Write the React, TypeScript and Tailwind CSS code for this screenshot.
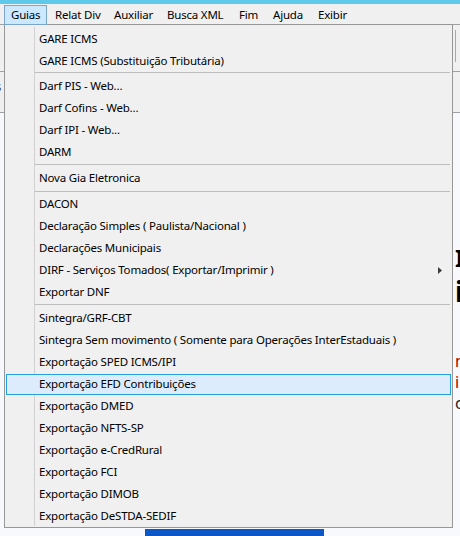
import type { ReactNode } from "react";

type Entry =
  | { label: string; active?: boolean; submenu?: boolean }
  | { sep: number; line: number };

const entries: Entry[] = [
  { label: "GARE ICMS" },
  { label: "GARE ICMS (Substituição Tributária)" },
  { sep: 3, line: 0 },
  { label: "Darf PIS - Web..." },
  { label: "Darf Cofins - Web..." },
  { label: "Darf IPI - Web..." },
  { label: "DARM" },
  { sep: 4, line: 1 },
  { label: "Nova Gia Eletronica" },
  { sep: 4, line: 2 },
  { label: "DACON" },
  { label: "Declaração Simples ( Paulista/Nacional )" },
  { label: "Declarações Municipais" },
  { label: "DIRF - Serviços Tomados( Exportar/Imprimir )", submenu: true },
  { label: "Exportar DNF" },
  { sep: 4, line: 1 },
  { label: "Sintegra/GRF-CBT" },
  { label: "Sintegra Sem movimento ( Somente para Operações InterEstaduais )" },
  { label: "Exportação SPED ICMS/IPI" },
  { label: "Exportação EFD Contribuições", active: true },
  { label: "Exportação DMED" },
  { label: "Exportação NFTS-SP" },
  { label: "Exportação e-CredRural" },
  { label: "Exportação FCI" },
  { label: "Exportação DIMOB" },
  { label: "Exportação DeSTDA-SEDIF" },
];

const menuBar = [
  { label: "Guias", w: "w-[43px]", pl: "pl-[6px]" },
  { label: "Relat Div", w: "w-[60px]", pl: "pl-[7px]" },
  { label: "Auxiliar", w: "w-[53px]", pl: "pl-[6px]" },
  { label: "Busca XML", w: "w-[72px]", pl: "pl-[6px]" },
  { label: "Fim", w: "w-[34px]", pl: "pl-[6px]" },
  { label: "Ajuda", w: "w-[45px]", pl: "pl-[6px]" },
  { label: "Exibir", w: "w-[50px]", pl: "pl-[6px]" },
];

const SubArrow = () => (
  <svg width="4" height="7" viewBox="0 0 4 7" className="self-center mr-[8px] ml-auto">
    <path d="M0 0 L4 3.5 L0 7 Z" fill="#3c3c3c" />
  </svg>
);

const MenuItem = ({ label, active, submenu }: { label: string; active?: boolean; submenu?: boolean }) => (
  <div className={`h-[22px] px-[1px] pt-[1px] ${active ? "relative" : ""}`}>
    <div
      className={`flex h-[21px] border pl-[32px] ${
        active ? "border-[#26a0da] bg-[#dcecfc]" : "border-transparent"
      }`}
    >
      <span className="leading-[17px] whitespace-nowrap">{label}</span>
      {submenu && <SubArrow />}
    </div>
  </div>
);

const Separator = ({ h, line }: { h: number; line: number }) => (
  <div style={{ height: h, paddingTop: line }}>
    <div className="ml-[30px] mr-[2px] h-px bg-[#bdbdbd]" />
  </div>
);

const Frag = ({ children, className }: { children: ReactNode; className: string }) => (
  <div className={`whitespace-nowrap ${className}`}>{children}</div>
);

export default function App() {
  return (
    <div className="relative w-[460px] h-[536px] overflow-hidden bg-[#f7f9fc] font-['Noto_Sans',sans-serif] text-[11.5px] tracking-[-0.2px] text-black">
      {/* title bar edge */}
      <div className="h-[4px] bg-[#5fc9ea]" />

      {/* menu bar */}
      <div className="flex h-[20px] bg-[#f0f0f0] pl-[4px]">
        {menuBar.map((m, i) => (
          <div
            key={m.label}
            className={`${m.w} ${m.pl} mt-[1px] h-[20px] border leading-[18px] whitespace-nowrap ${
              i === 0 ? "relative z-20 border-[#7aa5cf] bg-[#cce8ff]" : "border-transparent"
            }`}
          >
            {m.label}
          </div>
        ))}
      </div>

      {/* window behind the menu */}
      <div className="border-t border-[#a0a0a0] bg-[#f0f0f0] h-[47px] flex justify-end pt-[5px]">
        <div className="mr-[4px] w-px h-[32px] bg-[#a9a9a9]" />
      </div>
      <div className="border-t border-[#a0a0a0] bg-[#f0f0f0] h-[41px] overflow-hidden">
        <div className="mt-[6px] ml-[-33px] text-[12px] text-[#333]">Status</div>
      </div>
      <div className="border-t border-[#a0a0a0] h-[424px] flex flex-col">
        <div className="flex flex-1">
          <div className="flex-1" />
          <div className="w-[5px] overflow-hidden pt-[133px] tracking-normal">
            <Frag className="text-[24px] font-bold leading-[24px] text-black">Importação</Frag>
            <Frag className="mt-[6px] text-[28px] font-bold leading-[30px] text-black">in</Frag>
            <Frag className="mt-[45px] text-[16px] leading-[21px] text-[#b00000]">m</Frag>
            <Frag className="text-[16px] leading-[21px] text-[#b00000]">ib</Frag>
            <Frag className="text-[16px] leading-[21px] text-[#222]">co</Frag>
          </div>
        </div>
        <div className="ml-[145px] w-[179px] h-[7px] bg-[#0b57c8]" />
      </div>

      {/* dropdown */}
      <div className="absolute left-[4px] top-[24px] z-10 w-[449px] h-[504px] border border-[#979797] bg-[#f0f0f0] pt-[3px]">
        <div className="absolute left-[29px] top-[2px] bottom-[1px] w-px bg-[#d0d0d0]" />
        {entries.map((e, i) =>
          "sep" in e ? (
            <Separator key={i} h={e.sep} line={e.line} />
          ) : (
            <MenuItem key={i} label={e.label} active={e.active} submenu={e.submenu} />
          )
        )}
      </div>
    </div>
  );
}
